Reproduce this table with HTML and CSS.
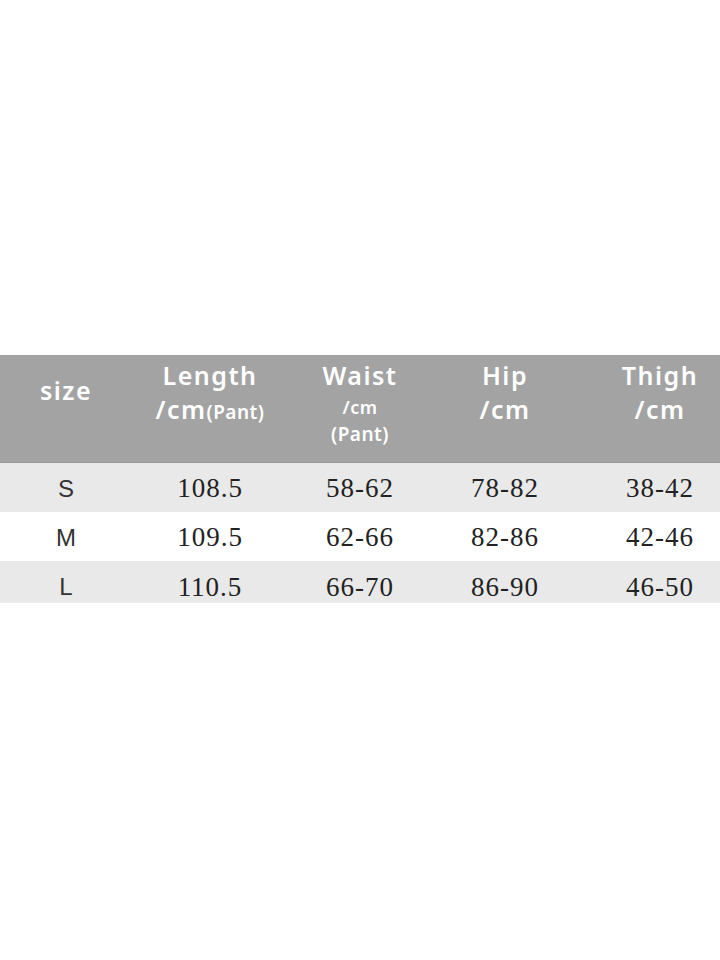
FILE: index.html
```html
<!DOCTYPE html>
<html>
<head>
<meta charset="utf-8">
<link rel="stylesheet" href="styles.css">
</head>
<body>
<div class="page">
  <div class="table">
    <div class="row head">
      <div class="cell c1"><span class="h">size</span></div>
      <div class="cell c2"><span class="h">Length</span><span class="h">/cm<small>(Pant)</small></span></div>
      <div class="cell c3 waist"><span class="h">Waist</span><span class="sub">/cm</span><span class="sub2">(Pant)</span></div>
      <div class="cell c4"><span class="h">Hip</span><span class="h">/cm</span></div>
      <div class="cell c5"><span class="h">Thigh</span><span class="h">/cm</span></div>
    </div>
    <div class="row data grey">
      <div class="cell c1 sz">S</div>
      <div class="cell c2">108.5</div>
      <div class="cell c3">58-62</div>
      <div class="cell c4">78-82</div>
      <div class="cell c5">38-42</div>
    </div>
    <div class="row data">
      <div class="cell c1 sz">M</div>
      <div class="cell c2">109.5</div>
      <div class="cell c3">62-66</div>
      <div class="cell c4">82-86</div>
      <div class="cell c5">42-46</div>
    </div>
    <div class="row data grey last">
      <div class="cell c1 sz">L</div>
      <div class="cell c2">110.5</div>
      <div class="cell c3">66-70</div>
      <div class="cell c4">86-90</div>
      <div class="cell c5">46-50</div>
    </div>
  </div>
</div>
</body>
</html>
```
FILE: styles.css
```css
html, body {
  margin: 0;
  padding: 0;
  background: #ffffff;
}
.page {
  width: 720px;
  height: 960px;
  padding-top: 355px;
  box-sizing: border-box;
}
.table {
  width: 720px;
}
.row {
  display: grid;
  grid-template-columns: 132px 156px 144px 146px 142px;
}
.cell {
  display: flex;
  flex-direction: column;
  align-items: center;
  justify-content: center;
  text-align: center;
}
.c5 {
  padding-left: 22px;
}
.head {
  height: 108px;
  background: #a3a3a3;
  border-bottom: 1px solid #999999;
  box-sizing: border-box;
  font-family: "Noto Sans", "Open Sans", sans-serif;
  font-weight: 600;
  color: #ffffff;
  letter-spacing: 1.5px;
}
.head .cell {
  justify-content: flex-start;
  padding-top: 3px;
}
.head .c1 {
  padding-top: 18px;
}
.h {
  font-size: 25px;
  line-height: 34px;
}
.h small {
  font-size: 19px;
  letter-spacing: 0.5px;
}
.waist .sub {
  font-size: 18px;
  line-height: 26px;
  margin-top: 2px;
  letter-spacing: 0.5px;
}
.waist .sub2 {
  font-size: 19px;
  line-height: 28px;
  letter-spacing: 0.5px;
}
.data {
  height: 49px;
  box-sizing: border-box;
  padding-top: 2px;
  font-family: "Liberation Serif", "Times New Roman", serif;
  font-size: 27px;
  letter-spacing: 1px;
  color: #222222;
}
.data.last {
  height: 42px;
  padding-top: 10px;
}
.grey {
  background: #e9e9e9;
}
.sz {
  font-family: "Liberation Sans", Arial, sans-serif;
  font-size: 24px;
  letter-spacing: 0;
  color: #333333;
}
```
